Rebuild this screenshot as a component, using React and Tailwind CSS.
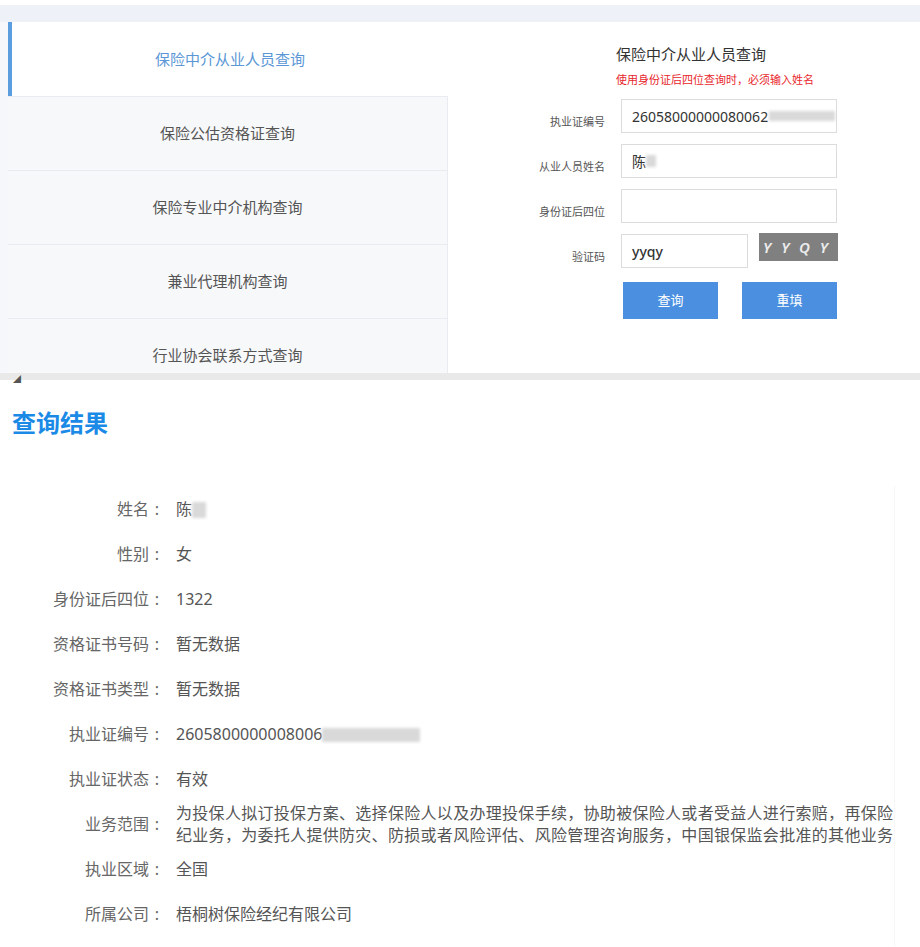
import React from "react";

const navItems = [
  "保险中介从业人员查询",
  "保险公估资格证查询",
  "保险专业中介机构查询",
  "兼业代理机构查询",
  "行业协会联系方式查询",
];

function Blur({ className = "" }) {
  return <span className={`inline-block align-middle bg-[#d9d9d9] blur-[1.5px] ${className}`} />;
}

function FormRow({ label, children }) {
  return (
    <div className="flex items-start">
      <div className="w-[158px] pt-[15px] pr-[1px] text-right text-[11px] leading-[16px] text-[#555]">{label}</div>
      <div className="ml-[15px] flex items-start gap-[11px]">{children}</div>
    </div>
  );
}

function ResultRow({ label, children }) {
  return (
    <div className="flex min-h-[45px] items-center">
      <div className="w-[165px] shrink-0 text-right text-[16px] leading-[22px] text-[#666]">
        {label}
        <span className="inline-block w-[16px] text-center">:</span>
      </div>
      <div className="ml-[11px] w-[717px] shrink-0 text-[16px] leading-[22px] text-[#555]">{children}</div>
    </div>
  );
}

export default function App() {
  return (
    <div className="min-h-[947px] w-[920px] bg-white font-['Noto_Sans','Noto_Sans_CJK_SC',sans-serif]">
      <div className="h-[5px]" />
      <div className="h-[17px] bg-[#eef2f8]" />

      {/* top query area */}
      <div className="flex h-[351px] overflow-hidden">
        <div className="w-[8px] bg-[#f6f7fa]" />
        <div className="flex w-[440px] flex-col">
          {navItems.map((t, i) =>
            i === 0 ? (
              <div
                key={t}
                className="flex h-[74px] shrink-0 items-center justify-center border-l-4 border-[#5b9ee0] bg-white text-[15px] text-[#5b97d6]"
              >
                {t}
              </div>
            ) : (
              <div
                key={t}
                className="flex h-[74px] shrink-0 items-center justify-center border-t border-r border-[#e8ebef] bg-[#f7f8fa] text-[15px] text-[#555]"
              >
                {t}
              </div>
            )
          )}
        </div>

        <div className="flex-1 bg-white pt-[22px]">
          <div className="pl-[168px]">
            <div className="text-[15px] leading-[20px] text-[#333]">保险中介从业人员查询</div>
            <div className="mt-[8px] text-[11px] leading-[16px] text-[#e8262b]">使用身份证后四位查询时，必须输入姓名</div>
          </div>

          <div className="mt-[11px] flex flex-col gap-[11px]">
            <FormRow label="执业证编号">
              <div className="flex h-[34px] w-[216px] items-center border border-[#dcdcdc] pl-[10px] text-[14px] text-[#333]">
                <span>26058000000080062</span>
                <Blur className="ml-[1px] h-[10px] w-[66px]" />
              </div>
            </FormRow>
            <FormRow label="从业人员姓名">
              <div className="flex h-[34px] w-[216px] items-center border border-[#dcdcdc] pl-[10px] text-[14px] text-[#333]">
                <span>陈</span>
                <Blur className="h-[12px] w-[10px]" />
              </div>
            </FormRow>
            <FormRow label="身份证后四位">
              <div className="h-[34px] w-[216px] border border-[#dcdcdc]" />
            </FormRow>
            <FormRow label="验证码">
              <div className="flex h-[34px] w-[127px] items-center border border-[#dcdcdc] pl-[10px] text-[14px] font-medium text-[#333]">
                yyqy
              </div>
              <div className="-mt-[1px] flex h-[28px] w-[79px] items-center bg-[#808080] pl-[4px] text-[15px] font-semibold italic tracking-[10px] text-[#ececec]">
                YYQY
              </div>
            </FormRow>
            <div className="mt-[3px] flex gap-[24px] pl-[175px]">
              <button className="h-[37px] w-[95px] bg-[#4a8fe0] text-[13px] text-white">查询</button>
              <button className="h-[37px] w-[95px] bg-[#4a8fe0] text-[13px] text-white">重填</button>
            </div>
          </div>
        </div>
      </div>

      <div className="relative h-[7px] bg-[#e9e9e9]">
        <span className="absolute left-[13px] top-[2px] text-[8px] leading-none text-[#555]">◢</span>
      </div>

      <h2 className="mt-[27px] pl-[12px] text-[24px] font-bold leading-[32px] text-[#1b8ae6]">查询结果</h2>

      <div className="mt-[47px] w-[895px] border-r border-[#f6f6f6] pb-[10px]">
        <ResultRow label="姓名">
          <span>陈</span>
          <Blur className="h-[16px] w-[14px]" />
        </ResultRow>
        <ResultRow label="性别">女</ResultRow>
        <ResultRow label="身份证后四位">1322</ResultRow>
        <ResultRow label="资格证书号码">暂无数据</ResultRow>
        <ResultRow label="资格证书类型">暂无数据</ResultRow>
        <ResultRow label="执业证编号">
          <span>2605800000008006</span>
          <Blur className="h-[14px] w-[98px]" />
        </ResultRow>
        <ResultRow label="执业证状态">有效</ResultRow>
        <ResultRow label="业务范围">
          <div className="text-justify [text-align-last:justify]">
            为投保人拟订投保方案、选择保险人以及办理投保手续，协助被保险人或者受益人进行索赔，再保险
          </div>
          <div className="text-justify [text-align-last:justify]">
            纪业务，为委托人提供防灾、防损或者风险评估、风险管理咨询服务，中国银保监会批准的其他业务
          </div>
        </ResultRow>
        <ResultRow label="执业区域">全国</ResultRow>
        <ResultRow label="所属公司">梧桐树保险经纪有限公司</ResultRow>
      </div>
    </div>
  );
}
